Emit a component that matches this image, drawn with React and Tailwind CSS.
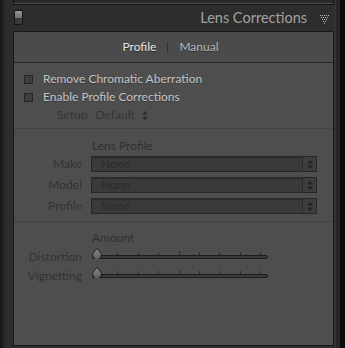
import React from 'react';

const font = { fontFamily: 'Lato, "Open Sans", sans-serif' };

function Checkbox({ label }) {
  return (
    <div className="flex items-center h-[18px] pl-[10px]">
      <div className="w-[9px] h-[9px] border border-[#262626] bg-[#3e3e3e]" />
      <span className="ml-[10px] text-[12px] text-[#c4c4c4] [text-shadow:0_1px_0_#3a3a3a]">{label}</span>
    </div>
  );
}

function Arrows({ color = '#262626' }) {
  return (
    <svg width="6" height="9" viewBox="0 0 6 9">
      <path d="M3 0 L6 3.5 L0 3.5 Z" fill={color} />
      <path d="M3 9 L6 5.5 L0 5.5 Z" fill={color} />
    </svg>
  );
}

function SelectRow({ label }) {
  return (
    <div className="flex items-center h-[16px]">
      <div className="w-[68px] text-right text-[12px] text-[#333333]">{label}</div>
      <div className="ml-[9px] w-[226px] h-[16px] flex border border-[#272727] bg-[#3a3a3a] shadow-[inset_0_1px_1px_#2e2e2e]">
        <div className="flex-1 pl-[9px] text-[12px] leading-[14px] text-[#2b2b2b]">None</div>
        <div className="w-[14px] h-full border-l border-[#2a2a2a] bg-[#3d3d3d] flex items-center justify-center">
          <Arrows color="#232323" />
        </div>
      </div>
    </div>
  );
}

function Thumb() {
  return (
    <svg width="12" height="11" viewBox="0 0 12 11" className="absolute left-[-1px] top-[-2px]">
      <defs>
        <linearGradient id="tg" x1="0" y1="0" x2="0" y2="1">
          <stop offset="0" stopColor="#8c8c8c" />
          <stop offset="1" stopColor="#5a5a5a" />
        </linearGradient>
      </defs>
      <path d="M6 0.5 L9.2 4.2 A4.4 4.4 0 1 1 2.8 4.2 Z" fill="url(#tg)" stroke="#1e1e1e" strokeWidth="1" />
    </svg>
  );
}

function SliderRow({ label }) {
  const ticks = [0, 1, 2, 3, 4, 5, 6, 7, 8];
  return (
    <div className="flex items-center h-[14px]">
      <div className="w-[68px] text-right text-[12px] text-[#333333]">{label}</div>
      <div className="ml-[10px] relative w-[176px] h-[14px]">
        {ticks.map((i) => (
          <div
            key={i}
            className={`absolute w-px bg-[#2c2c2c] ${i === 4 ? 'top-[1px] h-[4px]' : 'top-[2px] h-[3px]'}`}
            style={{ left: 5 + i * 20.4 }}
          />
        ))}
        <div className="absolute left-0 right-0 top-[5px] h-[4px] rounded-full border border-[#1c1c1c] bg-[#3b3b3b]" />
        <Thumb />
      </div>
    </div>
  );
}

function Triangle() {
  const dots = [];
  const rows = [
    [0, 2, 4, 6, 8],
    [1, 3, 5, 7],
    [2, 4, 6],
    [3, 5],
    [4],
  ];
  rows.forEach((r, y) => r.forEach((x) => dots.push(<rect key={`${x}-${y}`} x={x} y={y * 2} width="1" height="1" fill="#bdbdbd" />)));
  return (
    <svg width="9" height="10" viewBox="0 0 9 10">
      {dots}
    </svg>
  );
}

export default function App() {
  return (
    <div className="w-[345px] h-[348px] flex bg-[#2d2d2d] overflow-hidden" style={font}>
      {/* left edge */}
      <div className="w-[5px] h-full bg-gradient-to-r from-[#161616] to-[#2a2a2a]" />
      <div className="w-[8px] h-full bg-[#2d2d2d]" />

      <div className="w-[321px] flex flex-col">
        {/* bottom of previous panel */}
        <div className="h-[5px] border-x border-b border-[#141414] bg-[#2a2a2a] flex flex-col justify-end">
          <div className="h-px bg-[#4c4c4c]" />
        </div>

        {/* header */}
        <div className="relative h-[26px] flex items-center">
          <div className="absolute left-[1px] top-[5px] w-[9px] h-[15px] rounded-[2px] border border-[#151515] overflow-hidden flex flex-col">
            <div className="h-[7px] bg-gradient-to-b from-[#9a9a9a] to-[#6e6e6e]" />
            <div className="flex-1 bg-[#3a3a3a]" />
          </div>
          <div className="ml-auto text-[14.5px] text-[#a3a3a3]">Lens Corrections</div>
          <div className="ml-[13px] mr-[5px] mt-[3px]">
            <Triangle />
          </div>
        </div>

        {/* panel */}
        <div className="h-[315px] border border-[#181818] bg-[#4e4e4e] flex flex-col">
          <div className="h-[31px] pr-[6px] flex items-center justify-center border-b border-[#262626] bg-[#4b4b4b]">
            <span className="text-[12px] text-[#e6e6e6] [text-shadow:0_1px_0_#2a2a2a]">Profile</span>
            <div className="mx-[11px] w-px h-[11px] bg-[#333333]" />
            <span className="text-[12px] text-[#bcbcbc] [text-shadow:0_1px_0_#2a2a2a]">Manual</span>
          </div>

          <div className="pt-[7px] flex flex-col">
            <Checkbox label="Remove Chromatic Aberration" />
            <Checkbox label="Enable Profile Corrections" />
            <div className="flex items-center h-[18px] pl-[43px] text-[12px] text-[#353535]">
              <span>Setup</span>
              <span className="ml-[8px]">Default</span>
              <span className="ml-[7px] flex items-center">
                <Arrows color="#2a2a2a" />
              </span>
            </div>
          </div>

          <div className="mt-[4px] h-px bg-[#444444]" />

          <div className="pt-[9px] text-[12px] leading-[16px] pl-[78px] text-[#303030]">Lens Profile</div>
          <div className="mt-[2px] flex flex-col gap-[5px]">
            <SelectRow label="Make" />
            <SelectRow label="Model" />
            <SelectRow label="Profile" />
          </div>

          <div className="mt-[7px] h-px bg-[#444444]" />

          <div className="pt-[8px] text-[12px] leading-[16px] pl-[78px] text-[#303030]">Amount</div>
          <div className="mt-[4px] flex flex-col gap-[5px]">
            <SliderRow label="Distortion" />
            <SliderRow label="Vignetting" />
          </div>
        </div>
      </div>

      {/* right edge */}
      <div className="w-[2px] h-full bg-[#333333]" />
      <div className="w-[4px] h-full bg-[#262626]" />
      <div className="flex-1 h-full bg-[#0c0c0c]" />
    </div>
  );
}
